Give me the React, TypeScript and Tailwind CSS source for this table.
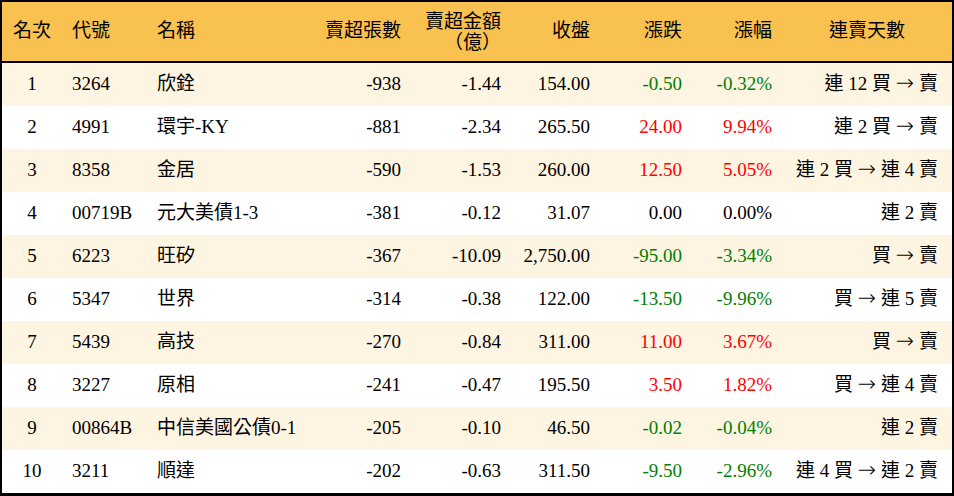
import React from "react";

type Tone = "up" | "down" | "flat";

type Row = {
  rank: number;
  code: string;
  name: string;
  lots: string;
  amount: string;
  close: string;
  change: string;
  pct: string;
  streak: string;
  tone: Tone;
};

const ROWS: Row[] = [
  { rank: 1, code: "3264", name: "欣銓", lots: "-938", amount: "-1.44", close: "154.00", change: "-0.50", pct: "-0.32%", streak: "連 12 買 → 賣", tone: "down" },
  { rank: 2, code: "4991", name: "環宇-KY", lots: "-881", amount: "-2.34", close: "265.50", change: "24.00", pct: "9.94%", streak: "連 2 買 → 賣", tone: "up" },
  { rank: 3, code: "8358", name: "金居", lots: "-590", amount: "-1.53", close: "260.00", change: "12.50", pct: "5.05%", streak: "連 2 買 → 連 4 賣", tone: "up" },
  { rank: 4, code: "00719B", name: "元大美債1-3", lots: "-381", amount: "-0.12", close: "31.07", change: "0.00", pct: "0.00%", streak: "連 2 賣", tone: "flat" },
  { rank: 5, code: "6223", name: "旺矽", lots: "-367", amount: "-10.09", close: "2,750.00", change: "-95.00", pct: "-3.34%", streak: "買 → 賣", tone: "down" },
  { rank: 6, code: "5347", name: "世界", lots: "-314", amount: "-0.38", close: "122.00", change: "-13.50", pct: "-9.96%", streak: "買 → 連 5 賣", tone: "down" },
  { rank: 7, code: "5439", name: "高技", lots: "-270", amount: "-0.84", close: "311.00", change: "11.00", pct: "3.67%", streak: "買 → 賣", tone: "up" },
  { rank: 8, code: "3227", name: "原相", lots: "-241", amount: "-0.47", close: "195.50", change: "3.50", pct: "1.82%", streak: "買 → 連 4 賣", tone: "up" },
  { rank: 9, code: "00864B", name: "中信美國公債0-1", lots: "-205", amount: "-0.10", close: "46.50", change: "-0.02", pct: "-0.04%", streak: "連 2 賣", tone: "down" },
  { rank: 10, code: "3211", name: "順達", lots: "-202", amount: "-0.63", close: "311.50", change: "-9.50", pct: "-2.96%", streak: "連 4 買 → 連 2 賣", tone: "down" },
];

const toneClass: Record<Tone, string> = {
  up: "text-[#ff0000]",
  down: "text-[#008000]",
  flat: "text-black",
};

const COLS = "grid grid-cols-[60px_85px_164px_100px_100px_89px_92px_90px_170px]";

// arrow rendered in a wider font so it reads like the reference
function Streak({ text }: { text: string }) {
  const parts = text.split("→");
  return (
    <>
      {parts.map((p, i) => (
        <React.Fragment key={i}>
          {i > 0 && <span className="font-['DejaVu_Sans',sans-serif] text-[22px] leading-none font-light">→</span>}
          {p}
        </React.Fragment>
      ))}
    </>
  );
}

export default function App() {
  return (
    <div
      lang="zh-Hant-TW"
      className="w-[954px] h-[496px] bg-white font-['Liberation_Serif','Noto_Sans_CJK_TC',serif] text-[19px] text-black"
    >
      <div className="border-x-2 border-t-2 border-b-[3px] border-black">
        {/* header */}
        <div className={`${COLS} h-[61px] items-center bg-[#f8c150] border-b-2 border-black`}>
          <div className="text-center">名次</div>
          <div className="pl-[10px]">代號</div>
          <div className="pl-[10px]">名稱</div>
          <div className="pr-[10px] text-right">賣超張數</div>
          <div className="pr-[10px] text-right">
            <div className="h-[21px] leading-[21px]">賣超金額</div>
            <div className="h-[21px] leading-[21px]">（億）</div>
          </div>
          <div className="pr-[10px] text-right">收盤</div>
          <div className="pr-[10px] text-right">漲跌</div>
          <div className="pr-[10px] text-right">漲幅</div>
          <div className="text-center">連賣天數</div>
        </div>

        {/* rows */}
        {ROWS.map((r, i) => (
          <div
            key={r.rank}
            className={`${COLS} h-[43px] items-center ${i % 2 === 0 ? "bg-[#fdf4e1]" : "bg-white"}`}
          >
            <div className="text-center">{r.rank}</div>
            <div className="pl-[10px]">{r.code}</div>
            <div className="pl-[10px] whitespace-nowrap">{r.name}</div>
            <div className="pr-[10px] text-right">{r.lots}</div>
            <div className="pr-[10px] text-right">{r.amount}</div>
            <div className="pr-[10px] text-right">{r.close}</div>
            <div className={`pr-[10px] text-right ${toneClass[r.tone]}`}>{r.change}</div>
            <div className={`pr-[10px] text-right ${toneClass[r.tone]}`}>{r.pct}</div>
            <div className="pr-[14px] text-right whitespace-pre">
              <Streak text={r.streak} />
            </div>
          </div>
        ))}
      </div>
    </div>
  );
}
